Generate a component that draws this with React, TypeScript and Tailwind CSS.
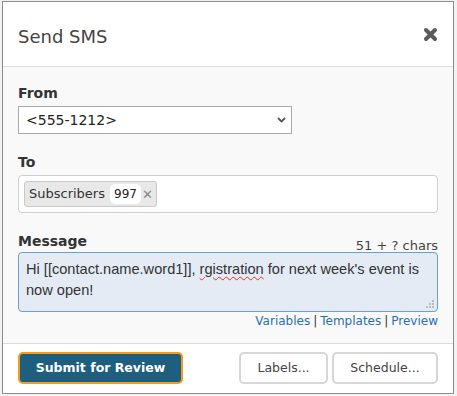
import React from "react";

const sans = { fontFamily: '"DejaVu Sans", Verdana, sans-serif' };

function CloseIcon() {
  return (
    <svg width="15" height="15" viewBox="0 0 15 15" aria-hidden="true">
      <path
        d="M3 3 L12 12 M12 3 L3 12"
        stroke="#5a5a5a"
        strokeWidth="4"
        strokeLinecap="round"
        fill="none"
      />
    </svg>
  );
}

function Chevron() {
  return (
    <svg width="9" height="6" viewBox="0 0 9 6" aria-hidden="true">
      <path d="M1 1 L4.5 4.5 L8 1" stroke="#555" strokeWidth="1.8" fill="none" />
    </svg>
  );
}

function Grip() {
  return (
    <svg width="8" height="8" viewBox="0 0 8 8" aria-hidden="true" className="absolute right-[3px] bottom-[3px]">
      <rect x="6" y="0" width="2" height="2" fill="#bbb" />
      <rect x="3" y="3" width="2" height="2" fill="#bbb" />
      <rect x="6" y="3" width="2" height="2" fill="#bbb" />
      <rect x="0" y="6" width="2" height="2" fill="#bbb" />
      <rect x="3" y="6" width="2" height="2" fill="#bbb" />
      <rect x="6" y="6" width="2" height="2" fill="#bbb" />
    </svg>
  );
}

export default function App() {
  return (
    <div className="w-[457px] h-[396px] bg-[#f2f2f2] pl-[2px] pt-[1px]" style={sans}>
      <div className="w-[452px] h-[393px] border border-[#8c8c8c] bg-white flex flex-col">
        {/* header */}
        <div className="h-[65px] flex items-center justify-between pl-[15px] pr-[15px] border-b border-[#dcdcdc] shrink-0">
          <h1 className="text-[18px] text-[#444] pt-[4px]">Send SMS</h1>
          <button aria-label="Close">
            <CloseIcon />
          </button>
        </div>

        {/* body */}
        <div className="bg-[#f9f9f9] px-[15px] pt-[17px] h-[277px] border-b border-[#dcdcdc] shrink-0">
          <label className="block text-[14px] font-bold text-[#333] leading-[18px]">From</label>
          <div className="mt-[4px] w-[274px] h-[28px] border border-[#a9a9a9] bg-white flex items-center justify-between pl-[7px] pr-[5px]">
            <span className="text-[14px] text-[#222]">&lt;555-1212&gt;</span>
            <Chevron />
          </div>

          <label className="block text-[14px] font-bold text-[#333] leading-[18px] mt-[19px]">To</label>
          <div className="mt-[4px] h-[38px] border border-[#cfcfcf] rounded-[4px] bg-white flex items-center pl-[5px]">
            <div className="h-[26px] flex items-center bg-[#e8e8e8] border border-[#c8c8c8] rounded-[3px] pl-[4px] pr-[3px]">
              <span className="text-[13px] text-[#333]">Subscribers</span>
              <span className="ml-[5px] bg-white rounded-[5px] px-[4px] h-[20px] flex items-center text-[12px] text-[#222]">997</span>
              <span className="ml-[1px] text-[13px] text-[#888] leading-none">✕</span>
            </div>
          </div>

          <div className="mt-[19px] flex justify-between items-end">
            <span className="text-[14px] font-bold text-[#333] leading-[18px]">Message</span>
            <span className="text-[13px] text-[#444] leading-[15px] -mb-[3px]">51 + ? chars</span>
          </div>
          <div
            className="relative mt-[2px] h-[60px] border border-[#6b9fd3] rounded-[4px] bg-[#e4ebf4] pl-[7px] pr-[4px] pt-[6px] text-[14.6px] leading-[21px] text-[#333]"
            style={{ fontFamily: '"Liberation Sans", Arial, sans-serif' }}
          >
            Hi [[contact.name.word1]],{" "}
            <span className="underline decoration-wavy decoration-[#e03030] decoration-[1px] underline-offset-[2px]">rgistration</span>{" "}
            for next week's event is now open!
            <Grip />
          </div>
          <div className="mt-[1px] flex justify-end gap-[3px] text-[12px] leading-[16px]">
            <a className="text-[#2a6fb0]">Variables</a>
            <span className="text-[#333]">|</span>
            <a className="text-[#2a6fb0]">Templates</a>
            <span className="text-[#333]">|</span>
            <a className="text-[#2a6fb0]">Preview</a>
          </div>
        </div>

        {/* footer */}
        <div className="flex-1 bg-white px-[15px] pt-[8px] flex items-start justify-between">
          <button className="w-[165px] h-[32px] rounded-[5px] border-2 border-[#f59b1c] bg-[#1e5e7e] text-white font-bold text-[12.5px]">
            Submit for Review
          </button>
          <div className="flex gap-[4px]">
            <button className="w-[89px] h-[32px] rounded-[5px] border-2 border-[#d6d6d6] bg-white text-[12.5px] text-[#444]">
              Labels...
            </button>
            <button className="w-[106px] h-[32px] rounded-[5px] border-2 border-[#d6d6d6] bg-white text-[12.5px] text-[#444]">
              Schedule...
            </button>
          </div>
        </div>
      </div>
    </div>
  );
}
